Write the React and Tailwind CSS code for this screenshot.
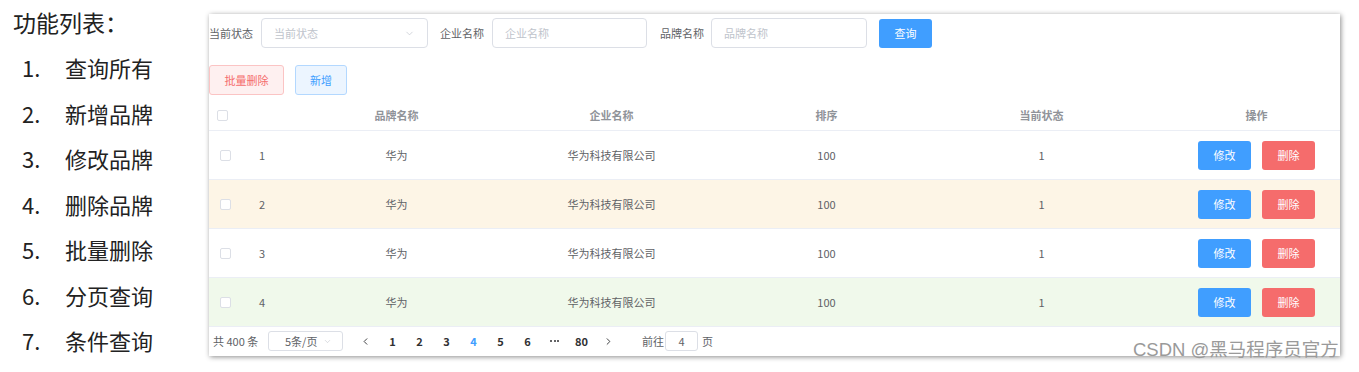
import { ChevronDown, ChevronLeft, ChevronRight } from "lucide-react";

const features = ["查询所有", "新增品牌", "修改品牌", "删除品牌", "批量删除", "分页查询", "条件查询"];

const rows = [
  { id: 1, bg: "bg-white" },
  { id: 2, bg: "bg-[#fdf5e6]" },
  { id: 3, bg: "bg-white" },
  { id: 4, bg: "bg-[#f0f9eb]" },
];

const cols = "grid grid-cols-[40px_40px_215px_215px_215px_215px_215px]";

const Checkbox = () => (
  <span className="block w-[11px] h-[11px] rounded-[2px] border border-[#dcdfe6] bg-white" />
);

const App = () => {
  return (
    <div
      className="relative flex w-[1359px] h-[372px] bg-white overflow-hidden"
      style={{ fontFamily: '"Noto Sans CJK SC", "Noto Sans", sans-serif' }}
    >
      {/* 左侧功能列表 */}
      <div className="w-[209px] shrink-0 pl-[13px] pt-[4px] text-[#222]">
        <h1 className="text-[23px] leading-[36px]">功能列表：</h1>
        <ol className="mt-[5px]">
          {features.map((f, i) => (
            <li key={f} className="flex items-center h-[45.5px] text-[22px]">
              <span className="w-[52px] pl-[9px]">{i + 1}.</span>
              <span>{f}</span>
            </li>
          ))}
        </ol>
      </div>

      {/* 主面板 */}
      <div className="mt-[14px] w-[1131px] h-[342px] bg-white shadow-[1px_1px_5px_rgba(0,0,0,0.45)] overflow-hidden flex flex-col text-[11px] text-[#606266]">
        {/* 搜索表单 */}
        <div className="flex items-center pt-[4px] h-[34px]">
          <span className="w-[52px]">当前状态</span>
          <div className="w-[167px] h-[30px] border border-[#dcdfe6] rounded-[4px] flex items-center justify-between px-[12px] text-[#c0c4cc]">
            <span>当前状态</span>
            <ChevronDown size={11} strokeWidth={1.5} />
          </div>
          <span className="ml-[12px] w-[52px]">企业名称</span>
          <div className="w-[155px] h-[30px] border border-[#dcdfe6] rounded-[4px] flex items-center px-[12px] text-[#c0c4cc]">
            企业名称
          </div>
          <span className="ml-[13px] w-[51px]">品牌名称</span>
          <div className="w-[156px] h-[30px] border border-[#dcdfe6] rounded-[4px] flex items-center px-[12px] text-[#c0c4cc]">
            品牌名称
          </div>
          <button className="ml-[12px] w-[53px] h-[29px] rounded-[3px] bg-[#409eff] text-white">查询</button>
        </div>

        {/* 操作按钮 */}
        <div className="flex items-center gap-[11px] mt-[17px]">
          <button className="w-[75px] h-[30px] rounded-[3px] border border-[#fbc4c4] bg-[#fef0f0] text-[#f56c6c]">批量删除</button>
          <button className="w-[52px] h-[30px] rounded-[3px] border border-[#b3d8ff] bg-[#ecf5ff] text-[#409eff]">新增</button>
        </div>

        {/* 表格 */}
        <div className="mt-[5px]">
          <div className={`${cols} h-[31px] items-center border-b border-[#ebeef5] font-bold text-[#909399]`}>
            <div className="pl-[8px]"><Checkbox /></div>
            <div />
            <div className="text-center">品牌名称</div>
            <div className="text-center">企业名称</div>
            <div className="text-center">排序</div>
            <div className="text-center">当前状态</div>
            <div className="text-center">操作</div>
          </div>
          {rows.map((r) => (
            <div key={r.id} className={`${cols} h-[49px] items-center border-b border-[#ebeef5] ${r.bg}`}>
              <div className="pl-[11px]"><Checkbox /></div>
              <div className="pl-[10px]">{r.id}</div>
              <div className="text-center">华为</div>
              <div className="text-center">华为科技有限公司</div>
              <div className="text-center">100</div>
              <div className="text-center">1</div>
              <div className="flex justify-center gap-[11px]">
                <button className="w-[53px] h-[29px] rounded-[3px] bg-[#409eff] text-white">修改</button>
                <button className="w-[53px] h-[29px] rounded-[3px] bg-[#f56c6c] text-white">删除</button>
              </div>
            </div>
          ))}
        </div>

        {/* 分页 */}
        <div className="flex items-center h-[28px] pl-[4px] text-[#606266]">
          <span className="w-[55px]">共 400 条</span>
          <div className="w-[75px] h-[20px] border border-[#dcdfe6] rounded-[3px] flex items-center justify-between pl-[16px] pr-[10px]">
            <span>5条/页</span>
            <ChevronDown size={9} strokeWidth={1.5} className="text-[#c0c4cc]" />
          </div>
          <div className="flex items-center ml-[9px] font-bold text-[#303133]">
            <span className="w-[27px] flex justify-center"><ChevronLeft size={11} strokeWidth={2} /></span>
            {["1", "2", "3", "4", "5", "6"].map((p) => (
              <span key={p} className={`w-[27px] text-center ${p === "4" ? "text-[#409eff]" : ""}`}>{p}</span>
            ))}
            <span className="w-[27px] flex justify-center gap-[1.5px]">
              <i className="block w-[2px] h-[2px] rounded-full bg-[#303133]" />
              <i className="block w-[2px] h-[2px] rounded-full bg-[#303133]" />
              <i className="block w-[2px] h-[2px] rounded-full bg-[#303133]" />
            </span>
            <span className="w-[27px] text-center">80</span>
            <span className="w-[27px] flex justify-center"><ChevronRight size={11} strokeWidth={2} /></span>
          </div>
          <span className="ml-[20px]">前往</span>
          <div className="ml-[1px] w-[33px] h-[20px] border border-[#dcdfe6] rounded-[3px] flex items-center justify-center">4</div>
          <span className="ml-[4px]">页</span>
        </div>
      </div>

      {/* 水印 */}
      <div
        className="absolute left-[1133px] top-[336px] text-[18.5px] text-[#9a9a9a] whitespace-nowrap"
        style={{ fontFamily: '"Liberation Sans", "Noto Sans CJK SC", sans-serif' }}
      >
        CSDN @黑马程序员官方
      </div>
    </div>
  );
};

export default App;
